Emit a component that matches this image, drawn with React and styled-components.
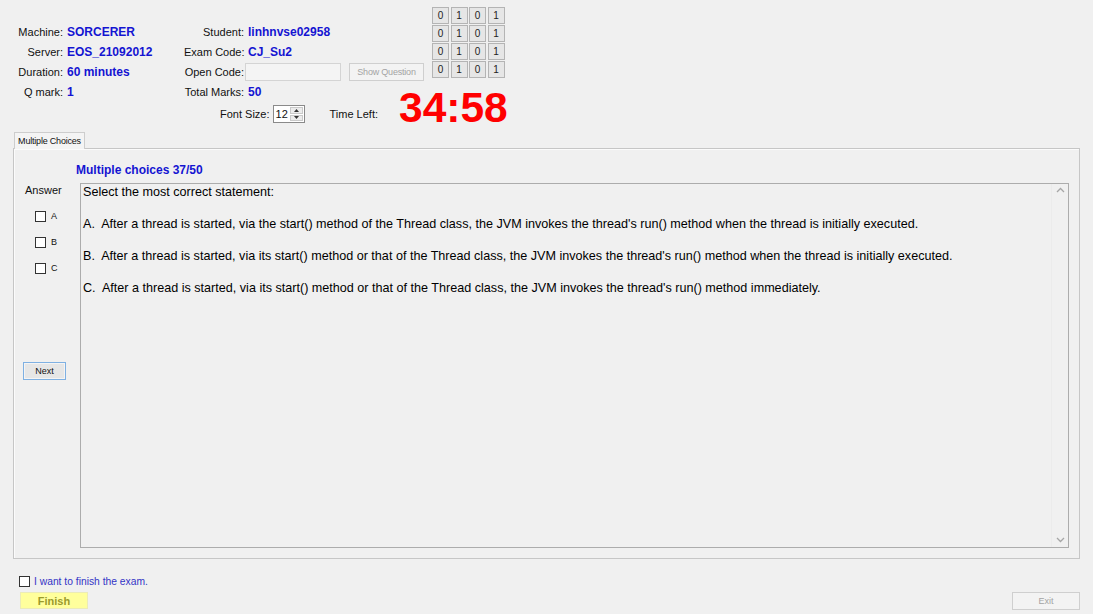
import React from "react";
import styled, { createGlobalStyle } from "styled-components";

const GlobalStyle = createGlobalStyle`
  html, body {
    margin: 0;
    padding: 0;
    background: #f0f0f0;
  }
  body {
    font-family: "Liberation Sans", Arial, sans-serif;
  }
  button {
    font-family: "Liberation Sans", Arial, sans-serif;
    padding: 0;
    box-sizing: border-box;
  }
`;

const Window = styled.div`
  width: 1093px;
  height: 614px;
  overflow: hidden;
  background: #f0f0f0;
  color: #111;
  font-size: 11px;
`;

const Header = styled.div`
  display: grid;
  grid-template-columns: 424px auto;
  column-gap: 8px;
  height: 129px;
`;

const LeftCol = styled.div`
  padding-top: 22px;
`;

const InfoGrid = styled.div`
  display: grid;
  grid-template-columns: 63px 113px 60px auto;
  grid-auto-rows: 20px;
  column-gap: 4px;
  align-items: center;
`;

const Label = styled.span`
  text-align: right;
  white-space: nowrap;
  font-size: 11px;
`;

const Value = styled.span`
  font-size: 12px;
  font-weight: bold;
  color: #1414d2;
  white-space: nowrap;
`;

const CodeCell = styled.div`
  display: flex;
  align-items: center;
  gap: 8px;
  margin-left: -3px;
`;

const TextBox = styled.div`
  width: 96px;
  height: 18px;
  box-sizing: border-box;
  border: 1px solid #d4d4d4;
  background: #f4f4f4;
`;

const DisabledButton = styled.button`
  width: ${(p) => p.$w}px;
  height: 18px;
  border: 1px solid #cfcfcf;
  background: #f3f3f3;
  color: #a3a3a3;
  font-size: 9px;
  letter-spacing: ${(p) => p.$ls || 0}px;
`;

const FontRow = styled.div`
  display: flex;
  align-items: center;
  height: 18px;
  margin-top: 3px;
  padding-left: 220px;
`;

const Spinner = styled.div`
  display: flex;
  width: 32px;
  height: 18px;
  box-sizing: border-box;
  margin-left: 3px;
  border: 1px solid #8a8a8a;
  background: #fff;
`;

const SpinValue = styled.span`
  flex: 1;
  padding-left: 2px;
  line-height: 16px;
  font-size: 11px;
`;

const SpinButtons = styled.div`
  display: flex;
  flex-direction: column;
  width: 13px;
  padding: 1px 1px 1px 0;
  gap: 1px;
`;

const SpinHalf = styled.div`
  flex: 1;
  display: flex;
  align-items: center;
  justify-content: center;
  background: #ececec;
  border: 1px solid #c9c9c9;
`;

const TimeLabel = styled.span`
  margin-left: 25px;
  font-size: 11px;
`;

const RightCol = styled.div`
  display: flex;
  flex-direction: column;
  padding-top: 7px;
`;

const Matrix = styled.div`
  display: grid;
  grid-template-columns: repeat(4, 17px);
  grid-auto-rows: 17px;
  gap: 1px 1.5px;
`;

const BitButton = styled.button`
  width: 17px;
  height: 17px;
  border: 1px solid #b4b4b4;
  background: #e6e6e6;
  color: #222;
  font-size: 10px;
`;

const Timer = styled.div`
  margin: 9px 0 0 -33px;
  font-size: 42.5px;
  line-height: 42px;
  font-weight: bold;
  color: #ff0000;
`;

const TabArea = styled.div`
  width: 1067px;
  margin: 3px 0 0 13px;
`;

const TabStrip = styled.div`
  display: flex;
  padding-left: 1px;
`;

const Tab = styled.div`
  position: relative;
  z-index: 1;
  width: 71px;
  height: 17px;
  box-sizing: border-box;
  margin-bottom: -1px;
  border: 1px solid #cdcdcd;
  border-bottom: none;
  background: #f4f4f4;
  font-size: 9px;
  letter-spacing: -0.2px;
  display: flex;
  align-items: center;
  justify-content: center;
`;

const Panel = styled.div`
  display: grid;
  grid-template-columns: 66px 1fr;
  grid-template-rows: auto 1fr;
  height: 411px;
  box-sizing: border-box;
  padding: 13px 10px 10px 0;
  border: 1px solid #c6c6c6;
  box-shadow: inset 1px 1px 0 #fbfbfb;
  background: #f0f0f0;
`;

const Title = styled.div`
  grid-column: 2;
  margin: 0 0 5px -4px;
  font-size: 12px;
  font-weight: bold;
  line-height: 16px;
  color: #1414d2;
`;

const AnswerCol = styled.div`
  grid-column: 1;
  grid-row: 2;
  display: flex;
  flex-direction: column;
  align-items: flex-start;
`;

const AnswerTitle = styled.div`
  padding-left: 11px;
  line-height: 14px;
  font-size: 11px;
`;

const OptionList = styled.div`
  margin-top: 6px;
  padding-left: 21px;
`;

const OptionRow = styled.div`
  display: flex;
  align-items: center;
  gap: 5px;
  height: 26px;
  font-size: 9px;
`;

const CheckBox = styled.span`
  display: inline-block;
  width: 11px;
  height: 11px;
  box-sizing: border-box;
  border: 1px solid #333;
  background: #fff;
`;

const NextButton = styled.button`
  width: 43px;
  height: 18px;
  margin: 81px 0 0 9px;
  border: 1px solid #7fb0e2;
  background: #e6e6e6;
  box-shadow: inset 0 0 0 1px #f4f4f4;
  color: #111;
  font-size: 9px;
`;

const QuestionBox = styled.div`
  grid-column: 2;
  grid-row: 2;
  display: flex;
  height: 365px;
  box-sizing: border-box;
  border: 1px solid #acacac;
`;

const QuestionText = styled.div`
  flex: 1;
  padding-left: 2px;
  font-size: 12.6px;
  line-height: 16px;
  color: #000;
  white-space: pre-wrap;
`;

const Para = styled.p`
  margin: 0 0 16px;
`;

const ScrollBar = styled.div`
  display: flex;
  flex-direction: column;
  justify-content: space-between;
  align-items: center;
  width: 16px;
  padding: 3px 0 4px;
  border-left: 1px solid #ebebeb;
`;

const Footer = styled.div`
  padding: 16px 13px 0 19px;
`;

const FinishRow = styled.div`
  display: flex;
  align-items: center;
  gap: 4px;
  height: 13px;
`;

const FinishText = styled.span`
  font-size: 10.3px;
  color: #3434c6;
`;

const ButtonRow = styled.div`
  display: flex;
  justify-content: space-between;
  align-items: flex-start;
  margin-top: 4px;
`;

const FinishButton = styled.button`
  width: 68px;
  height: 17px;
  margin-left: 1px;
  border: 1px solid #ebebb8;
  background: #ffff9c;
  color: #9a9a2c;
  font-size: 11px;
  font-weight: bold;
`;

const Chevron = ({ up }) => (
  <svg width="9" height="6" viewBox="0 0 9 6">
    <polyline
      points={up ? "1,5 4.5,1.5 8,5" : "1,1 4.5,4.5 8,1"}
      fill="none"
      stroke="#a6a6a6"
      strokeWidth="1.3"
    />
  </svg>
);

const Triangle = ({ up }) => (
  <svg width="5" height="3" viewBox="0 0 5 3">
    <polygon points={up ? "0,3 2.5,0 5,3" : "0,0 2.5,3 5,0"} fill="#333" />
  </svg>
);

const info = [
  ["Machine:", "SORCERER", "Student:", "linhnvse02958"],
  ["Server:", "EOS_21092012", "Exam Code:", "CJ_Su2"],
  ["Duration:", "60 minutes", "Open Code:", null],
  ["Q mark:", "1", "Total Marks:", "50"],
];

const bits = ["0", "1", "0", "1"];

const answers = [
  "A.  After a thread is started, via the start() method of the Thread class, the JVM invokes the thread's run() method when the thread is initially executed.",
  "B.  After a thread is started, via its start() method or that of the Thread class, the JVM invokes the thread's run() method when the thread is initially executed.",
  "C.  After a thread is started, via its start() method or that of the Thread class, the JVM invokes the thread's run() method immediately.",
];

export default function App() {
  return (
    <Window>
      <GlobalStyle />
      <Header>
        <LeftCol>
          <InfoGrid>
            {info.map(([l1, v1, l2, v2]) => (
              <React.Fragment key={l1}>
                <Label>{l1}</Label>
                <Value>{v1}</Value>
                <Label>{l2}</Label>
                {v2 !== null ? (
                  <Value>{v2}</Value>
                ) : (
                  <CodeCell>
                    <TextBox />
                    <DisabledButton $w={75} $ls={-0.2}>
                      Show Question
                    </DisabledButton>
                  </CodeCell>
                )}
              </React.Fragment>
            ))}
          </InfoGrid>
          <FontRow>
            <Label>Font Size:</Label>
            <Spinner>
              <SpinValue>12</SpinValue>
              <SpinButtons>
                <SpinHalf>
                  <Triangle up />
                </SpinHalf>
                <SpinHalf>
                  <Triangle />
                </SpinHalf>
              </SpinButtons>
            </Spinner>
            <TimeLabel>Time Left:</TimeLabel>
          </FontRow>
        </LeftCol>
        <RightCol>
          <Matrix>
            {[0, 1, 2, 3].map((r) =>
              bits.map((b, c) => <BitButton key={`${r}-${c}`}>{b}</BitButton>)
            )}
          </Matrix>
          <Timer>34:58</Timer>
        </RightCol>
      </Header>

      <TabArea>
        <TabStrip>
          <Tab>Multiple Choices</Tab>
        </TabStrip>
        <Panel>
          <Title>Multiple choices 37/50</Title>
          <AnswerCol>
            <AnswerTitle>Answer</AnswerTitle>
            <OptionList>
              {["A", "B", "C"].map((o) => (
                <OptionRow key={o}>
                  <CheckBox />
                  {o}
                </OptionRow>
              ))}
            </OptionList>
            <NextButton>Next</NextButton>
          </AnswerCol>
          <QuestionBox>
            <QuestionText>
              <Para>Select the most correct statement:</Para>
              {answers.map((a) => (
                <Para key={a}>{a}</Para>
              ))}
            </QuestionText>
            <ScrollBar>
              <Chevron up />
              <Chevron />
            </ScrollBar>
          </QuestionBox>
        </Panel>
      </TabArea>

      <Footer>
        <FinishRow>
          <CheckBox />
          <FinishText>I want to finish the exam.</FinishText>
        </FinishRow>
        <ButtonRow>
          <FinishButton>Finish</FinishButton>
          <DisabledButton $w={68}>Exit</DisabledButton>
        </ButtonRow>
      </Footer>
    </Window>
  );
}
